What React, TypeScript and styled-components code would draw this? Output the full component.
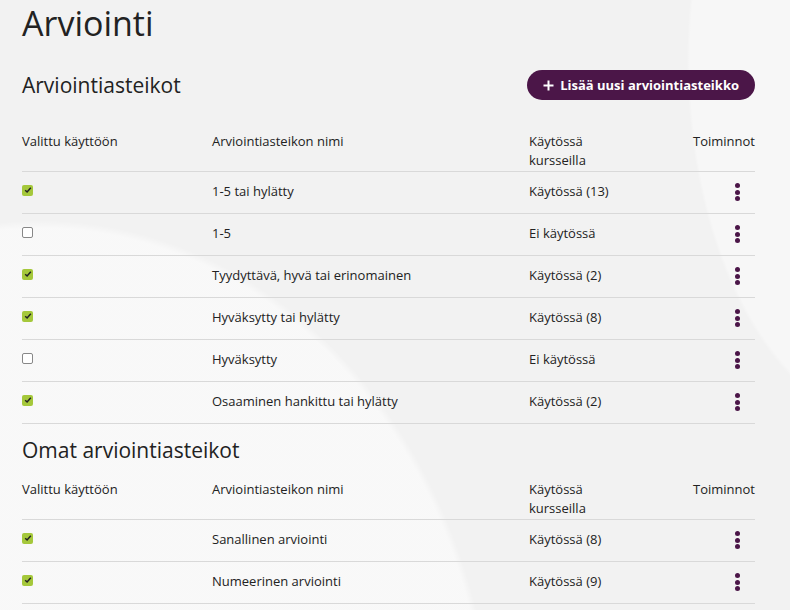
import React from 'react'
import styled, { createGlobalStyle } from 'styled-components'

const GlobalStyle = createGlobalStyle`
  html, body {
    margin: 0;
    padding: 0;
  }
  body {
    font-family: 'Open Sans', 'Noto Sans', sans-serif;
    color: #222;
    background-color: #f2f2f2;
    background-image:
      radial-gradient(ellipse 640px 760px at 40px 760px, rgba(255,255,255,0.5) 0%, rgba(255,255,255,0.5) 70%, transparent 71%),
      radial-gradient(ellipse 300px 520px at 900px 60px, rgba(255,255,255,0.4) 0%, rgba(255,255,255,0.4) 70%, transparent 71%);
    min-height: 610px;
  }
`

const Page = styled.main`
  width: 733px;
  padding: 0 0 0 22px;
`

const Title = styled.h1`
  font-size: 34px;
  font-weight: 400;
  margin: 0;
  line-height: 46px;
`

const SectionHead = styled.div<{ $top: number }>`
  display: flex;
  align-items: center;
  justify-content: space-between;
  height: 30px;
  margin-top: ${({ $top }) => $top}px;
`

const SectionTitle = styled.h2`
  font-size: 21px;
  font-weight: 400;
  margin: 0;
`

const AddButton = styled.button`
  display: flex;
  align-items: center;
  gap: 6px;
  height: 30px;
  padding: 0 16px;
  border: none;
  border-radius: 15px;
  background: #4b1648;
  color: #fff;
  font-family: inherit;
  font-size: 13px;
  font-weight: 700;
  cursor: pointer;
`

const Table = styled.div<{ $top: number }>`
  margin-top: ${({ $top }) => $top}px;
`

const Row = styled.div<{ $head?: boolean }>`
  display: grid;
  grid-template-columns: 190px 317px 1fr 80px;
  align-items: ${({ $head }) => ($head ? 'start' : 'center')};
  height: ${({ $head }) => ($head ? 'auto' : '42px')};
  padding-bottom: ${({ $head }) => ($head ? '1px' : '3px')};
  box-sizing: border-box;
  border-bottom: 1px solid #d9d9d9;
  font-size: 13px;
  line-height: 19px;
`

const Cell = styled.div<{ $right?: boolean }>`
  display: flex;
  justify-content: ${({ $right }) => ($right ? 'flex-end' : 'flex-start')};
`

const Check = styled.span<{ $on: boolean }>`
  display: inline-flex;
  align-items: center;
  justify-content: center;
  width: 11px;
  height: 11px;
  box-sizing: border-box;
  border-radius: 2px;
  margin-top: -2px;
  background: ${({ $on }) => ($on ? '#a5c83b' : '#fff')};
  border: ${({ $on }) => ($on ? 'none' : '1px solid #888')};
`

const Kebab = styled.span`
  display: flex;
  flex-direction: column;
  gap: 1.5px;
  margin-top: 2px;
  margin-right: 15px;
  & > i {
    width: 5px;
    height: 5px;
    border-radius: 50%;
    background: #4b1648;
  }
`

type Scale = { name: string; usage: string; on: boolean }

const general: Scale[] = [
  { name: '1-5 tai hylätty', usage: 'Käytössä (13)', on: true },
  { name: '1-5', usage: 'Ei käytössä', on: false },
  { name: 'Tyydyttävä, hyvä tai erinomainen', usage: 'Käytössä (2)', on: true },
  { name: 'Hyväksytty tai hylätty', usage: 'Käytössä (8)', on: true },
  { name: 'Hyväksytty', usage: 'Ei käytössä', on: false },
  { name: 'Osaaminen hankittu tai hylätty', usage: 'Käytössä (2)', on: true },
]

const own: Scale[] = [
  { name: 'Sanallinen arviointi', usage: 'Käytössä (8)', on: true },
  { name: 'Numeerinen arviointi', usage: 'Käytössä (9)', on: true },
]

const ScaleTable = ({ rows, top }: { rows: Scale[]; top: number }) => (
  <Table $top={top}>
    <Row $head>
      <Cell>Valittu käyttöön</Cell>
      <Cell>Arviointiasteikon nimi</Cell>
      <Cell>Käytössä<br />kursseilla</Cell>
      <Cell $right>Toiminnot</Cell>
    </Row>
    {rows.map((r) => (
      <Row key={r.name}>
        <Cell>
          <Check $on={r.on}>
            {r.on && (
              <svg width="8" height="8" viewBox="0 0 8 8">
                <path d="M1.2 4.2 L3.1 6 L6.8 1.8" stroke="#222" strokeWidth="1.5" fill="none" />
              </svg>
            )}
          </Check>
        </Cell>
        <Cell>{r.name}</Cell>
        <Cell>{r.usage}</Cell>
        <Cell $right>
          <Kebab><i /><i /><i /></Kebab>
        </Cell>
      </Row>
    ))}
  </Table>
)

export default function App() {
  return (
    <>
      <GlobalStyle />
      <Page>
        <Title>Arviointi</Title>
        <SectionHead $top={24}>
          <SectionTitle>Arviointiasteikot</SectionTitle>
          <AddButton>
            <svg width="11" height="11" viewBox="0 0 11 11">
              <path d="M5.5 0.5 V10.5 M0.5 5.5 H10.5" stroke="#fff" strokeWidth="2" />
            </svg>
            Lisää uusi arviointiasteikko
          </AddButton>
        </SectionHead>
        <ScaleTable rows={general} top={32} />
        <SectionHead $top={11}>
          <SectionTitle>Omat arviointiasteikot</SectionTitle>
        </SectionHead>
        <ScaleTable rows={own} top={15} />
      </Page>
    </>
  )
}
